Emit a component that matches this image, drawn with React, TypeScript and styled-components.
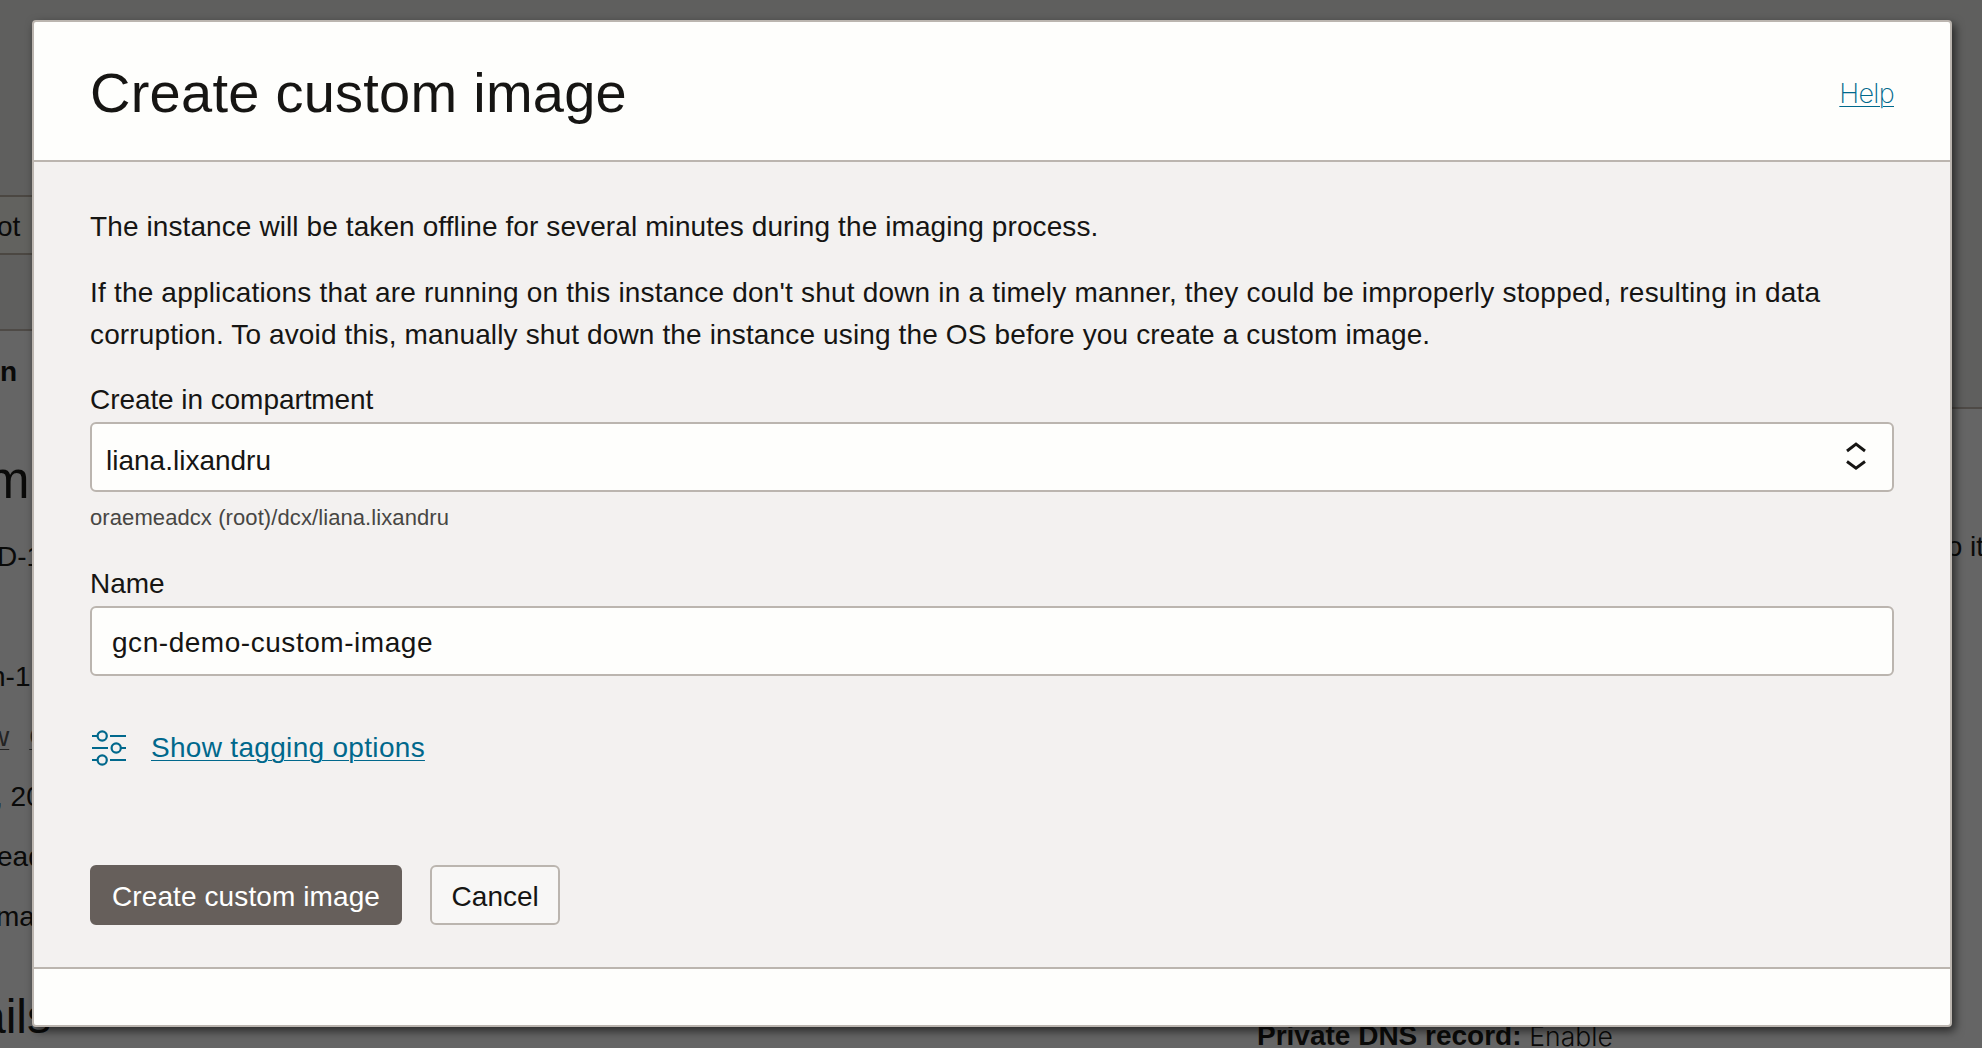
import React from "react";
import styled, { createGlobalStyle } from "styled-components";

const Global = createGlobalStyle`
  *, *::before, *::after { box-sizing: border-box; }
  body { margin: 0; background: #656565; overflow: hidden; }
  body, button, input { font-family: "Liberation Sans", Arial, sans-serif; }
`;

const Stage = styled.div`
  position: relative;
  display: flex;
  width: 1982px;
  height: 1048px;
  overflow: hidden;
  background: #656565;
  color: #0a0a09;
  font-size: 28px;
`;

const Column = styled.div`
  flex: 1;
  display: flex;
  flex-direction: column;
  min-width: 0;
`;

const Banner = styled.div<{ $height: number }>`
  flex: none;
  display: flex;
  align-items: flex-start;
  height: ${(p) => p.$height}px;
  padding-top: 195px;
  background: #5f5f5e;
  border-bottom: 2px solid #4e4a46;
`;

const GhostButton = styled.div`
  width: 36px;
  height: 60px;
  border: solid #4b4742;
  border-width: 2px 0;
  background: #62625f;
  line-height: 60px;
  text-indent: -3px;
`;

const Detail = styled.div<{ $shift?: number }>`
  flex: none;
  display: flex;
  height: 60px;
  line-height: 62px;
  text-indent: ${(p) => p.$shift ?? 0}px;
  white-space: pre;
`;

const TabLabel = styled(Detail)`
  height: 82px;
  line-height: 82px;
  font-weight: 700;
`;

const Heading = styled(Detail)`
  height: 92px;
  margin-top: 21px;
  line-height: 94px;
  font-size: 51px;
`;

const DetailGroup = styled.div`
  margin-bottom: 60px;
`;

const SectionTitle = styled(Detail)`
  height: 63px;
  margin-top: 39px;
  line-height: 64px;
  font-size: 48px;
`;

const DetailLinks = styled(Detail)`
  gap: 20px;
  color: #232323;
  text-decoration: underline;
  text-decoration-thickness: 1px;
  text-underline-offset: 3px;
`;

const SideNote = styled(Detail)`
  margin: 107px -2px 0 0;
  justify-content: flex-end;
`;

const DnsRecord = styled(Detail)`
  margin-top: 429px;
  padding-left: 266px;
`;

const Light = styled.span`
  font-family: Inter, "Liberation Sans", sans-serif;
  font-size: 26.5px;
  font-weight: 300;
`;

const Dialog = styled.section`
  position: absolute;
  inset: 20px 30px 21px 32px;
  display: flex;
  flex-direction: column;
  border: 2px solid #bbb5af;
  border-radius: 4px;
  background: #fefefc;
  color: #161513;
  box-shadow: 3px 4px 10px rgba(0, 0, 0, 0.6);
`;

const Header = styled.header`
  display: flex;
  align-items: center;
  justify-content: space-between;
  height: 140px;
  padding: 0 56px;
  border-bottom: 2px solid #bbb5af;
`;

const Title = styled.h1`
  margin: 0;
  padding-top: 4px;
  font-size: 56px;
  line-height: 66px;
  font-weight: 400;
  letter-spacing: 0.25px;
`;

const HelpLink = styled.a`
  padding-top: 6px;
  font-family: Inter, "Liberation Sans", sans-serif;
  font-size: 27px;
  font-weight: 200;
  line-height: 32px;
  letter-spacing: -0.7px;
  color: #00688c;
  text-decoration: underline;
  text-decoration-thickness: 1px;
  text-underline-offset: 3px;
`;

const Body = styled.main`
  flex: 1;
  padding: 44px 56px 0;
  background: #f3f1f0;
  line-height: 42px;
`;

const Paragraph = styled.p`
  margin: 0 0 24px;
`;

const Line = styled.span<{ $track: number }>`
  display: block;
  white-space: nowrap;
  letter-spacing: ${(p) => p.$track}px;
`;

const FormGroup = styled.div`
  display: flex;
  flex-direction: column;
  margin-bottom: 30px;
`;

const Label = styled.label`
  padding-bottom: 2px;
  line-height: 40px;
  letter-spacing: -0.07px;
`;

const SelectField = styled.div`
  display: flex;
  align-items: center;
  justify-content: space-between;
  height: 70px;
  padding: 0 26px 0 14px;
  border: 2px solid #bbb5af;
  border-radius: 6px;
  background: #fefefc;
`;

const SelectValue = styled.span`
  padding-top: 7px;
`;

const TextField = styled(SelectField)`
  padding: 3px 20px 0;
  letter-spacing: 0.54px;
`;

const Hint = styled.div`
  margin-top: 10px;
  font-size: 22px;
  line-height: 32px;
  letter-spacing: 0.09px;
  color: #474643;
`;

const TagRow = styled.div`
  display: flex;
  align-items: center;
  gap: 25px;
  height: 40px;
  margin-top: 52px;
`;

const TagLink = styled.a`
  color: #00688c;
  letter-spacing: 0.31px;
  text-decoration: underline;
  text-decoration-thickness: 1px;
  text-underline-offset: 3px;
`;

const Actions = styled.div`
  display: flex;
  gap: 28px;
  margin-top: 97px;
`;

const Button = styled.button<{ $primary?: boolean }>`
  height: 60px;
  padding: 3px ${(p) => (p.$primary ? 20 : 19.6)}px 0;
  border: 2px solid ${(p) => (p.$primary ? "#665f5b" : "#bbb5af")};
  border-radius: 6px;
  background: ${(p) => (p.$primary ? "#665f5b" : "#f8f7f6")};
  color: ${(p) => (p.$primary ? "#ffffff" : "#161513")};
  font-size: 28px;
  letter-spacing: ${(p) => (p.$primary ? 0.1 : 0)}px;
  white-space: nowrap;
`;

const Footer = styled.footer`
  height: 58px;
  border-top: 2px solid #bbb5af;
`;

const TagIcon = () => (
  <svg width="36" height="36" viewBox="0 0 36 36" fill="none" stroke="#00688c" strokeWidth="2.2">
    <path d="M2 6h5M20 6h16M2 18h16M31 18h5M2 30h5M20 30h16" />
    <circle cx="12.2" cy="6" r="4.6" />
    <circle cx="26.2" cy="18" r="4.6" />
    <circle cx="12.2" cy="30" r="4.6" />
  </svg>
);

const SortIcon = () => (
  <svg width="20" height="32" viewBox="0 0 20 32" fill="none" stroke="#161513" strokeWidth="2.9">
    <path d="M1 10L10 3L19 10M1 20.5L10 27.1L19 20.5" />
  </svg>
);

export default function App() {
  return (
    <>
      <Global />
      <Stage>
        <Column>
          <Banner $height={331}>
            <GhostButton>ot</GhostButton>
          </Banner>
          <TabLabel>n</TabLabel>
          <Heading $shift={-13}>m</Heading>
          <DetailGroup>
            <Detail $shift={-3}>D-1</Detail>
          </DetailGroup>
          <Detail $shift={-10}>n-1</Detail>
          <DetailLinks>
            <Detail $shift={-11}>w</Detail>
            <Detail>C</Detail>
          </DetailLinks>
          <Detail $shift={-5}>, 20</Detail>
          <Detail $shift={-3}>ead</Detail>
          <Detail $shift={-4}>ma</Detail>
          <SectionTitle $shift={-21}>ails</SectionTitle>
        </Column>
        <Column>
          <Banner $height={409} />
          <SideNote>o it</SideNote>
          <DnsRecord>
            <b>Private DNS record: </b>
            <Light>Enable</Light>
          </DnsRecord>
        </Column>
        <Dialog role="dialog">
          <Header>
            <Title>Create custom image</Title>
            <HelpLink>Help</HelpLink>
          </Header>
          <Body>
            <Paragraph>
              <Line $track={0.1}>The instance will be taken offline for several minutes during the imaging process.</Line>
            </Paragraph>
            <Paragraph>
              <Line $track={0.19}>If the applications that are running on this instance don't shut down in a timely manner, they could be improperly stopped, resulting in data</Line>
              <Line $track={0.14}>corruption. To avoid this, manually shut down the instance using the OS before you create a custom image.</Line>
            </Paragraph>
            <FormGroup>
              <Label>Create in compartment</Label>
              <SelectField>
                <SelectValue>liana.lixandru</SelectValue>
                <SortIcon />
              </SelectField>
              <Hint>oraemeadcx (root)/dcx/liana.lixandru</Hint>
            </FormGroup>
            <FormGroup>
              <Label>Name</Label>
              <TextField>gcn-demo-custom-image</TextField>
            </FormGroup>
            <TagRow>
              <TagIcon />
              <TagLink>Show tagging options</TagLink>
            </TagRow>
            <Actions>
              <Button $primary>Create custom image</Button>
              <Button>Cancel</Button>
            </Actions>
          </Body>
          <Footer />
        </Dialog>
      </Stage>
    </>
  );
}
